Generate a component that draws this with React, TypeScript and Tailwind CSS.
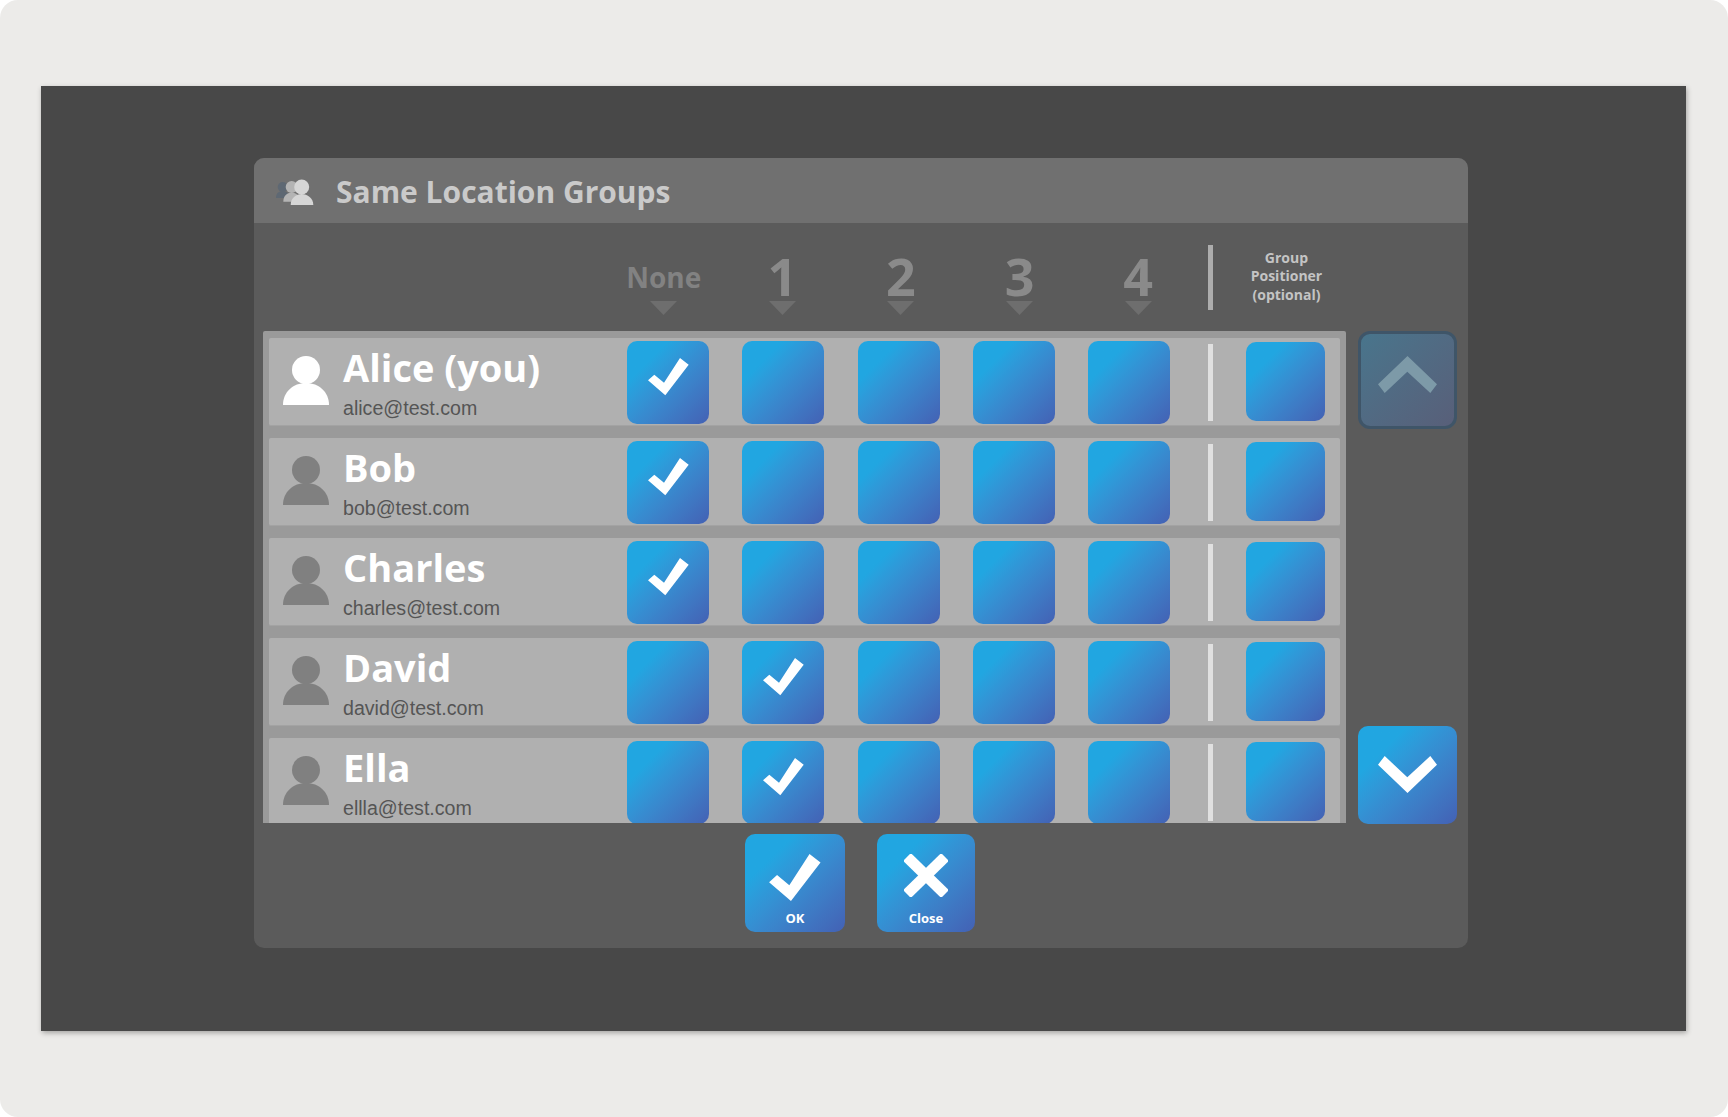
const people = [
  { name: "Alice (you)", email: "alice@test.com", pick: 0, me: true },
  { name: "Bob", email: "bob@test.com", pick: 0 },
  { name: "Charles", email: "charles@test.com", pick: 0 },
  { name: "David", email: "david@test.com", pick: 1 },
  { name: "Ella", email: "ellla@test.com", pick: 1 },
];

const blue = "bg-linear-to-br from-[#21a6e1] from-25% to-[#4361b4]";

function Check({ w, h }: { w: number; h: number }) {
  return (
    <svg width={w} height={h} viewBox="0 0 41 38" fill="#fff">
      <polygon points="0,22.3 6.3,16.7 16,24.7 32,0 40.7,6.7 17.3,37.3" />
    </svg>
  );
}

function Person({ color }: { color: string }) {
  return (
    <svg width="46" height="49" viewBox="0 0 46 49" fill={color} className="shrink-0">
      <circle cx="23" cy="14" r="14" />
      <path d="M0 49C0 36 10 27 23 27S46 36 46 49Z" />
    </svg>
  );
}

function GroupIcon() {
  return (
    <svg width="38" height="27" viewBox="0 0 38 27" className="mt-[4px] shrink-0">
      <g fill="#5e6873">
        <circle cx="6.700" cy="8" r="5" />
        <path d="M0 19C0 14 3 12 6.700 12S13 14 13 19Z" />
      </g>
      <g fill="#b4b4b4">
        <circle cx="15.700" cy="8" r="6" />
        <path d="M7.300 22.700C7.300 17 11 13.500 15.700 13.500S24 17 24 22.700Z" />
      </g>
      <g fill="#d6d6d6">
        <circle cx="25.700" cy="8" r="7.500" />
        <path d="M14.700 26C14.700 19 20 15 25.700 15S37.300 19 37.300 26Z" />
      </g>
    </svg>
  );
}

function HeadCell({ label, big }: { label: string; big?: boolean }) {
  return (
    <div className="w-[118.6px] shrink-0 flex flex-col items-center">
      <div
        className={
          big
            ? "h-[50px] flex items-center font-['Open_Sans',sans-serif] font-bold text-[52px] leading-none text-[#8a8a8a]"
            : "h-[50px] pt-[2px] flex items-center font-['Open_Sans',sans-serif] font-bold text-[28px] leading-none text-[#828282]"
        }
      >
        {label}
      </div>
      <svg width="27" height="14" viewBox="0 0 27 14" fill="#6e6e6e">
        <polygon points="0,0 27,0 13.500,14" />
      </svg>
    </div>
  );
}

function Box({ on }: { on?: boolean }) {
  return (
    <div className={`w-[82px] h-[83px] shrink-0 mt-[3px] rounded-[10px] flex items-center justify-center pb-[12px] ${blue}`}>
      {on && <Check w={41} h={38} />}
    </div>
  );
}

function Row({ p }: { p: (typeof people)[number] }) {
  return (
    <div className="w-[1071px] h-[88px] shrink-0 flex items-start bg-[#b0b0b0] border-b border-[#a3a3a3] rounded-[2px] overflow-hidden">
      <div className="ml-[14px] mt-[18px]">
        <Person color={p.me ? "#ffffff" : "#808080"} />
      </div>
      <div className="ml-[14px] w-[284px] shrink-0">
        <div className="mt-[7px] h-[44px] font-['Open_Sans',sans-serif] font-bold text-[38px] leading-[44px] text-white">
          {p.name}
        </div>
        <div className="mt-[8px] font-['Liberation_Sans',Arial,sans-serif] text-[19.6px] leading-[23px] text-[#555555]">
          {p.email}
        </div>
      </div>
      <div className="flex gap-[33.250px]">
        {[0, 1, 2, 3, 4].map((i) => (
          <Box key={i} on={p.pick === i} />
        ))}
      </div>
      <div className="ml-[38px] mt-[6px] w-[5px] h-[77px] bg-[#e0e0e0] shrink-0" />
      <div className={`ml-[33px] mt-[4px] w-[79px] h-[79px] shrink-0 rounded-[10px] ${blue}`} />
    </div>
  );
}

function FootButton({ label, wide, children }: { label: string; wide?: boolean; children: React.ReactNode }) {
  return (
    <div className={`${wide ? "w-[100px]" : "w-[98px]"} h-[98px] rounded-[10px] flex flex-col items-center ${blue}`}>
      <div className="h-[68px] flex items-end justify-center">{children}</div>
      <div className="mt-[7px] font-['Open_Sans',sans-serif] font-bold text-[13px] leading-[18px] text-white">{label}</div>
    </div>
  );
}

export default function App() {
  return (
    <div className="w-full h-[1117px] bg-white overflow-hidden">
      <div className="w-full h-full bg-[#ecebe9] rounded-[18px] pl-[41px] pt-[86px]">
        <div className="w-[1645px] h-[945px] bg-[#484848] pl-[213px] pt-[72px] shadow-[1px_2px_5px_rgba(0,0,0,0.3)]">
          <div className="w-[1214px] h-[790px] bg-[#5b5b5b] rounded-[10px] overflow-hidden">
            <div className="h-[65px] bg-[#707070] flex items-center pl-[22px]">
              <GroupIcon />
              <div className="ml-[22px] pt-[2px] font-['Open_Sans',sans-serif] font-bold text-[30px] leading-none text-[#cacaca]">
                Same Location Groups
              </div>
            </div>

            <div className="h-[108px] flex pl-[350.5px]">
              <div className="flex pt-[28px]">
                <HeadCell label="None" />
                <HeadCell label="1" big />
                <HeadCell label="2" big />
                <HeadCell label="3" big />
                <HeadCell label="4" big />
              </div>
              <div className="ml-[11px] mt-[22px] w-[5px] h-[65px] bg-[#adadad]" />
              <div className="ml-[35px] mt-[26px] w-[76px] text-center font-['Open_Sans',sans-serif] font-bold text-[14px] leading-[18.300px] text-[#c4c4c4]">
                Group Positioner (optional)
              </div>
            </div>

            <div className="flex pl-[9px]">
              <div className="w-[1083px] h-[492px] bg-[#9a9a9a] rounded-t-[2px] pl-[6px] pt-[7px] flex flex-col gap-[12px] overflow-hidden">
                {people.map((p) => (
                  <Row key={p.name} p={p} />
                ))}
              </div>
              <div className="ml-[12px] w-[99px] h-[493px] flex flex-col justify-between">
                <div className="h-[98px] rounded-[12px] border-[3px] border-[#3f5568] bg-linear-to-br from-[#48758c] to-[#585f79] flex items-center justify-center pb-[11px]">
                  <svg width="59" height="37" viewBox="0 0 59 37" fill="#7d9aa8">
                    <polygon points="29.500,0 59,28.300 52.300,37 29.300,15.700 6.700,37 0,28.300" />
                  </svg>
                </div>
                <div className={`h-[98px] rounded-[10px] flex items-center justify-center pb-[2px] ${blue}`}>
                  <svg width="59" height="37" viewBox="0 0 59 37" fill="#fff">
                    <polygon points="29.500,37 59,8.700 52.300,0 29.300,21.300 6.700,0 0,8.700" />
                  </svg>
                </div>
              </div>
            </div>

            <div className="flex pl-[491px] pt-[10px] gap-[32px]">
              <FootButton label="OK" wide>
                <Check w={54} h={48} />
              </FootButton>
              <FootButton label="Close">
                <svg width="44" height="43" viewBox="0 0 44 43" stroke="#fff" strokeWidth="11" className="mb-[5px]">
                  <line x1="3" y1="3" x2="41" y2="40" />
                  <line x1="41" y1="3" x2="3" y2="40" />
                </svg>
              </FootButton>
            </div>
          </div>
        </div>
      </div>
    </div>
  );
}
